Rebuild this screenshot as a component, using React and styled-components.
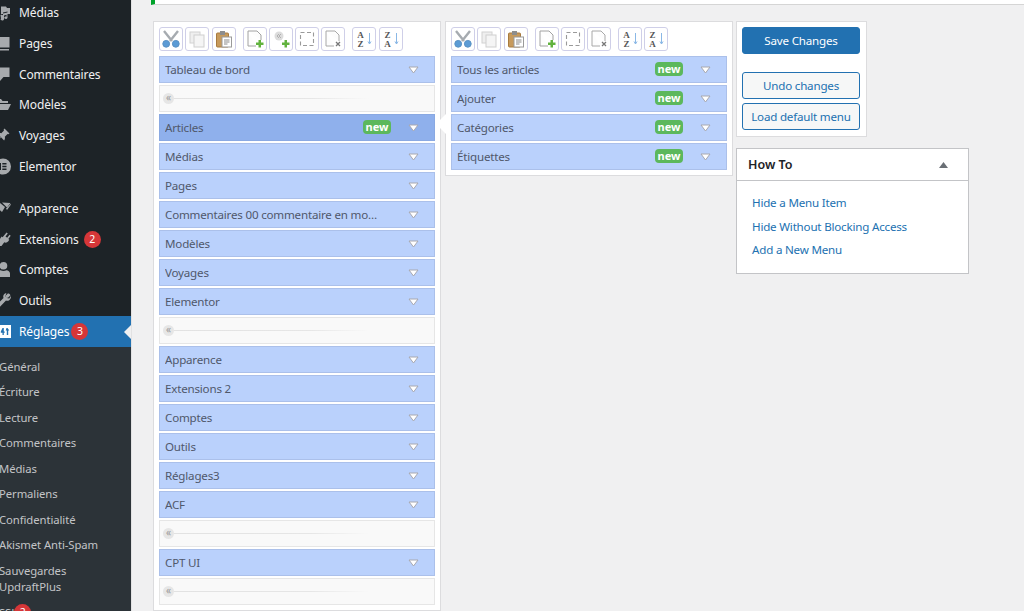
import styled, { createGlobalStyle } from 'styled-components';

const GlobalStyle = createGlobalStyle`
  html, body { margin: 0; padding: 0; height: 611px; overflow: hidden; background: #f0f0f1; }
  body { font-family: "Noto Sans", "Open Sans", sans-serif; font-size: 12px; color: #3c434a; }
`;

const Page = styled.div`
  display: flex;
  width: 1024px;
  height: 611px;
  overflow: hidden;
`;

/* ---- barre latérale ---- */
const Sidebar = styled.nav`
  position: relative;
  flex: 0 0 131px;
  height: 611px;
  overflow: hidden;
  background: #1d2327;
  border-right: 1px solid #e2e2e3;
  box-sizing: content-box;
`;

const MenuList = styled.div`
  margin-top: -2.9px;
`;

const MenuRow = styled.div`
  display: flex;
  align-items: center;
  height: ${(p) => (p.$active ? '31px' : '30.8px')};
  margin-top: ${(p) => (p.$gap ? '11px' : '0')};
  color: ${(p) => (p.$active ? '#fff' : '#f0f0f1')};
  background: ${(p) => (p.$active ? '#2271b1' : 'transparent')};
  font-size: 12px;
  letter-spacing: -0.12px;
  position: relative;
`;

const MenuIcon = styled.svg`
  flex: 0 0 11px;
  width: 11px;
  height: 17px;
  margin-right: 8px;
  fill: ${(p) => (p.$active ? '#fff' : '#a7aaad')};
`;

const CountBadge = styled.span`
  display: inline-flex;
  align-items: center;
  justify-content: center;
  width: 17px;
  height: 17px;
  margin-left: ${(p) => p.$offset || 5}px;
  border-radius: 50%;
  background: #d63638;
  color: #fff;
  font-size: 10.5px;
  line-height: 1;
`;

const ActiveNotch = styled.span`
  position: absolute;
  right: 0;
  top: 50%;
  margin-top: -7px;
  border: 7px solid transparent;
  border-right-color: #f0f0f1;
  border-left-width: 0;
`;

const SubMenu = styled.div`
  background: #2c3338;
  padding-top: 6.7px;
`;

const SubRow = styled.div`
  margin-left: -1px;
  padding: 4.75px 0;
  width: 128px;
  line-height: 16px;
  font-size: 11.3px;
  letter-spacing: -0.08px;
  color: #c3c4c7;
  display: flex;
  align-items: center;
`;

/* ---- contenu ---- */
const Main = styled.main`
  flex: 1;
  min-width: 0;
  display: flex;
  flex-direction: column;
`;

const Notice = styled.div`
  height: 4px;
  margin-left: 19px;
  background: #fff;
  border-bottom: 1px solid #d5d5d5;
  border-left: 4px solid #00a32a;
  flex: none;
`;

const Columns = styled.div`
  display: flex;
  align-items: flex-start;
  gap: 3px;
  margin: 16px 0 0 21px;
`;

const EditorColumns = styled.div`
  display: flex;
  align-items: flex-start;
  gap: 4px;
`;

const Panel = styled.section`
  position: relative;
  box-sizing: border-box;
  width: 288px;
  padding: 5px;
  background: #fff;
  border: 1px solid #dcdcde;
`;

const Toolbar = styled.div`
  display: flex;
  gap: 7px;
  margin-bottom: 5px;
`;

const ToolGroup = styled.div`
  display: flex;
  gap: 2.3px;
`;

const ToolButton = styled.button`
  display: flex;
  align-items: center;
  justify-content: center;
  box-sizing: border-box;
  width: 24px;
  height: 24px;
  padding: 0;
  background: #fff;
  border: 1px solid #cfcfe8;
  border-radius: 3px;
`;

const Rows = styled.div`
  display: flex;
  flex-direction: column;
  gap: 2px;
`;

const ItemRow = styled.div`
  position: relative;
  display: flex;
  align-items: center;
  box-sizing: border-box;
  height: 27px;
  padding: 0 15px 0 5px;
  background: ${(p) => (p.$selected ? '#8fb0ec' : '#bad1fc')};
  border: 1px solid ${(p) => (p.$selected ? '#8aa9e2' : '#abc0ea')};
  color: #50586b;
  font-size: 11.6px;
  letter-spacing: -0.2px;
  white-space: nowrap;
`;

const ItemTitle = styled.span`
  flex: 1;
  min-width: 0;
  margin-right: ${(p) => (p.$plain ? '30px' : '0')};
  overflow: hidden;
  text-overflow: ellipsis;
`;

const NewBadge = styled.span`
  flex: none;
  width: 28px;
  height: 14px;
  margin: 0 17px 2px 4px;
  border-radius: 4px;
  background: #5cb85c;
  color: #fff;
  font-size: 11px;
  font-weight: 700;
  letter-spacing: 0;
  line-height: 13px;
  text-align: center;
`;

const SeparatorRow = styled.div`
  display: flex;
  align-items: center;
  box-sizing: border-box;
  height: 27px;
  padding: 0 65px 0 3px;
  background: #f9f9f9;
  border: 1px solid #e6e6e6;
`;

const SepKnob = styled.span`
  flex: none;
  width: 11px;
  height: 11px;
  border-radius: 50%;
  background: #e6e6e6;
  color: #9a9a9a;
  font-size: 10px;
  line-height: 9px;
  text-align: center;
`;

const SepLine = styled.span`
  flex: 1;
  height: 1px;
  background: linear-gradient(to right, #e2e2e2 0%, #e6e6e6 70%, #f9f9f9 100%);
`;

const SubmenuTail = styled.span`
  position: absolute;
  left: -10px;
  top: 92px;
  border: 10px solid transparent;
  border-left-width: 0;
  border-right-color: #fff;
`;

const SideColumn = styled.div`
  display: flex;
  flex-direction: column;
  gap: 11px;
`;

const ActionBox = styled.div`
  box-sizing: border-box;
  display: flex;
  flex-direction: column;
  width: 131px;
  height: 116px;
  padding: 5px;
  background: #fff;
  border: 1px solid #dcdcde;
`;

const ActionButton = styled.button`
  box-sizing: border-box;
  width: 118px;
  height: 27px;
  margin-top: ${(p) => p.$top || 0}px;
  padding: 0;
  border: 1px solid #2271b1;
  border-radius: 3px;
  background: ${(p) => (p.$primary ? '#2271b1' : '#f6f7f7')};
  color: ${(p) => (p.$primary ? '#fff' : '#2271b1')};
  font-family: inherit;
  font-size: 11.6px;
  letter-spacing: -0.2px;
`;

const HowToBox = styled.div`
  box-sizing: border-box;
  width: 233px;
  height: 126px;
  background: #fff;
  border: 1px solid #c3c4c7;
`;

const HowToHeader = styled.div`
  display: flex;
  align-items: center;
  justify-content: space-between;
  box-sizing: border-box;
  height: 32px;
  padding: 0 20px 0 11px;
  border-bottom: 1px solid #c3c4c7;
  color: #1d2327;
  font-size: 12.5px;
  font-weight: 600;
`;

const HowToLinks = styled.div`
  display: flex;
  flex-direction: column;
  gap: 7.3px;
  padding: 14px 15px;
`;

const HowToLink = styled.a`
  color: #2271b1;
  font-size: 11.6px;
  letter-spacing: -0.2px;
  line-height: 16.3px;
  text-decoration: none;
`;

/* ---- icônes ---- */
const IconShape = {
  media: (
    <path d="M7 2.500h5l1 1.500h3v6h-2.500V7.500L9 8.600V10H7zM6.500 11c1-.6 2-.3 2.500.2V9.500l4.500-1v5.200c-.2 1-1.600 1.500-2.500 1.100-1-.4-1-1.500-.2-2 .5-.3 1.200-.3 1.700-.1V10.800l-2.500.6v3.800c-.2 1-1.500 1.500-2.500 1.100-.9-.3-1.200-1.300-.5-1.800z" />
  ),
  page: <path d="M2 2h13.500v10.500H2zM2 14h13v1.500H2z" />,
  comment: <path d="M1 1.500h14.500v9.500H9.500L5.500 15.500V11H1z" />,
  folder: <path d="M2 3h5l1.500 2H14v2H5L2.500 12zM6 8h11l-3 6H3z" />,
  pin: <path d="M10.500 1.500l5 5-1.200.8-.8-.4-2.700 2.800c.4 1.500.2 2.700-.7 3.700L7 10.300 3 14.800 2 15l.2-1 4.500-4L3.600 6.900c1-.9 2.200-1.100 3.700-.7L10 3.500l-.4-.8z" />,
  elementor: (
    <path
      fillRule="evenodd"
      d="M9 .5a8 8 0 1 1 0 16 8 8 0 0 1 0-16zM5.500 5v7H7V5zM8.300 5v1.500H12.500V5zM8.300 7.800v1.400H12.500V7.800zM8.300 10.500V12H12.500v-1.500z"
    />
  ),
  brush: <path d="M1 6l5-3 5 4-3 5zM8 2.500l8.500.5-3.500 4.500zM12 8.500l1-.8 3.500-3.700.5.5-4 5.500z" />,
  plugin: <path d="M12.500 1.500l1.300 1-2.300 3 1.700 1.300 2.300-3 1.200 1-2.400 3.200 1 .8-1 1.500c-1 1.300-2.700 1.700-4 1l-2.800 3.700H3V14l3-3.300c-.5-1.200-.3-2.600.6-3.800l1-1.400 1 .8z" />,
  user: <path d="M9.500 1a3.800 3.800 0 1 1 0 7.600 3.800 3.800 0 0 1 0-7.600zM3.500 16v-3.500C3.500 10.500 5 9.500 6.500 9.200c1.800 1 4.200 1 6 0 1.600.3 3.500 1.300 3.500 3.300V16z" />,
  wrench: <path d="M13 1.200c1.500-.2 3 .7 3.500 2.100l-2.500 2.500-1.800-.4-.4-1.800 2.400-2.300zM16.800 4c.4 1.500-.2 3.300-1.600 4.200-1 .6-2.200.7-3.200.3L5.500 15.300c-.8.800-2 .8-2.800 0s-.7-2 .1-2.800L9.500 6c-.5-1.200-.3-2.500.4-3.500.6-.8 1.500-1.300 2.500-1.400l-1 2.900 1.300 2.100 2.500.3z" />,
};

function SideIcon({ name, active }) {
  if (name === 'settings') {
    return (
      <MenuIcon viewBox="6 0 11 17" $active>
        <path d="M6 2h11v13H6z" />
        <path fill="#2271b1" d="M8.500 5h1.300v3.500h.9v1.200h-.9V12H8.500V9.700H6.800V8.500zM12.500 5h1l1.800 2.500h-1.100V12h-1.400V7.500h-1.100z" />
      </MenuIcon>
    );
  }
  return (
    <MenuIcon viewBox="6 0 11 17" $active={active}>
      {IconShape[name]}
    </MenuIcon>
  );
}

const Chevron = ({ up }) => (
  <svg width="11" height="8" viewBox="0 0 11 8" style={{ flex: 'none' }}>
    <path d="M1 1h9L5.500 7z" fill="#fff" stroke="#a8a8b0" strokeWidth="1" strokeLinejoin="round" transform={up ? 'rotate(180 5.500 4)' : undefined} />
  </svg>
);

const CutIcon = () => (
  <svg width="20" height="20" viewBox="0 0 20 20">
    <path d="M3 2l8 10M17 2L9 12" stroke="#a6abb0" strokeWidth="2.400" fill="none" />
    <circle cx="5.200" cy="14.800" r="3.400" fill="#5b9bd5" stroke="#5a92c4" />
    <circle cx="14.800" cy="14.800" r="3.400" fill="#5b9bd5" stroke="#5a92c4" />
  </svg>
);
const CopyIcon = () => (
  <svg width="18" height="18" viewBox="0 0 18 18">
    <rect x="2" y="2" width="10" height="11" fill="#efefef" stroke="#d2d2d2" />
    <rect x="6" y="5" width="10" height="12" fill="#f5f5f5" stroke="#cfcfcf" />
  </svg>
);
const PasteIcon = () => (
  <svg width="18" height="18" viewBox="0 0 18 18">
    <rect x="1.500" y="3" width="12" height="14" rx="1" fill="#c79a5c" stroke="#a87a3e" />
    <rect x="5" y="1" width="5" height="4" fill="#8d8d8d" />
    <rect x="7" y="7" width="9.500" height="10" fill="#fff" stroke="#9a9a9a" />
    <path d="M9 10h5.500M9 12h5.500M9 14h3.500" stroke="#8a8a8a" />
  </svg>
);
const GreenPlus = () => <path d="M13.500 11h2.500v2.500h2.500V16H16v2.500h-2.500V16H11v-2.500h2.500z" fill="#62b33e" />;
const NewIcon = () => (
  <svg width="20" height="20" viewBox="0 0 20 20">
    <path d="M3 2h9l4 4v5M11 17H3V2" fill="#fdfdfd" stroke="#a2a2a2" />
    <GreenPlus />
  </svg>
);
const NewSepIcon = () => (
  <svg width="20" height="20" viewBox="0 0 20 20">
    <circle cx="8" cy="7" r="4.500" fill="#dcdcdc" />
    <path d="M8 5L6 7l2 2M10 5L8 7l2 2" stroke="#a5a5a5" fill="none" strokeWidth=".8" />
    <GreenPlus />
  </svg>
);
const SelectIcon = () => (
  <svg width="18" height="18" viewBox="0 0 18 18">
    <rect x="2.500" y="2.500" width="13" height="13" fill="none" stroke="#9a9a9a" strokeWidth="1.100" strokeDasharray="4 2.500" />
  </svg>
);
const DeleteIcon = () => (
  <svg width="20" height="20" viewBox="0 0 20 20">
    <path d="M3 2h9l4 4v6M11 17H3V2" fill="#fdfdfd" stroke="#a8a8a8" />
    <path d="M13 13l4 4m0-4l-4 4" stroke="#777" strokeWidth="1.300" />
  </svg>
);
const SortIcon = ({ top, bottom }) => (
  <svg width="20" height="20" viewBox="0 0 20 20">
    <text x="6.500" y="8.500" textAnchor="middle" fontFamily="Liberation Serif, serif" fontSize="9" fontWeight="700" fill="#555">{top}</text>
    <text x="6.500" y="18" textAnchor="middle" fontFamily="Liberation Serif, serif" fontSize="9" fontWeight="700" fill="#555">{bottom}</text>
    <path d="M15.500 4v11M14 12.500l1.500 2.500 1.500-2.500" stroke="#8ab8e6" fill="none" strokeWidth="1" />
  </svg>
);

/* ---- données ---- */
const sideTop = [
  { name: 'media', label: 'Médias' },
  { name: 'page', label: 'Pages' },
  { name: 'comment', label: 'Commentaires' },
  { name: 'folder', label: 'Modèles' },
  { name: 'pin', label: 'Voyages' },
  { name: 'elementor', label: 'Elementor' },
  { name: 'brush', label: 'Apparence', gap: true },
  { name: 'plugin', label: 'Extensions', count: 2 },
  { name: 'user', label: 'Comptes' },
  { name: 'wrench', label: 'Outils' },
];

const sideSub = ['Général', 'Écriture', 'Lecture', 'Commentaires', 'Médias', 'Permaliens', 'Confidentialité', 'Akismet Anti-Spam'];

const topLevel = [
  { title: 'Tableau de bord' },
  { sep: true },
  { title: 'Articles', selected: true, isNew: true },
  { title: 'Médias' },
  { title: 'Pages' },
  { title: 'Commentaires 00 commentaire en modération' },
  { title: 'Modèles' },
  { title: 'Voyages' },
  { title: 'Elementor' },
  { sep: true },
  { title: 'Apparence' },
  { title: 'Extensions 2' },
  { title: 'Comptes' },
  { title: 'Outils' },
  { title: 'Réglages3' },
  { title: 'ACF' },
  { sep: true },
  { title: 'CPT UI' },
  { sep: true },
];

const subLevel = ['Tous les articles', 'Ajouter', 'Catégories', 'Étiquettes'];

function MenuItems({ items }) {
  return (
    <Rows>
      {items.map((item, index) =>
        item.sep ? (
          <SeparatorRow key={index}>
            <SepKnob>«</SepKnob>
            <SepLine />
          </SeparatorRow>
        ) : (
          <ItemRow key={index} $selected={item.selected}>
            <ItemTitle $plain={!item.isNew}>{item.title}</ItemTitle>
            {item.isNew && <NewBadge>new</NewBadge>}
            <Chevron />
          </ItemRow>
        )
      )}
    </Rows>
  );
}

function EditorToolbar({ withSeparator }) {
  return (
    <Toolbar>
      <ToolGroup>
        <ToolButton><CutIcon /></ToolButton>
        <ToolButton><CopyIcon /></ToolButton>
        <ToolButton><PasteIcon /></ToolButton>
      </ToolGroup>
      <ToolGroup>
        <ToolButton><NewIcon /></ToolButton>
        {withSeparator && <ToolButton><NewSepIcon /></ToolButton>}
        <ToolButton><SelectIcon /></ToolButton>
        <ToolButton><DeleteIcon /></ToolButton>
      </ToolGroup>
      <ToolGroup>
        <ToolButton><SortIcon top="A" bottom="Z" /></ToolButton>
        <ToolButton><SortIcon top="Z" bottom="A" /></ToolButton>
      </ToolGroup>
    </Toolbar>
  );
}

export default function App() {
  return (
    <Page>
      <GlobalStyle />
      <Sidebar>
        <MenuList>
          {sideTop.map((item) => (
            <MenuRow key={item.label} $gap={item.gap}>
              <SideIcon name={item.name} />
              {item.label}
              {item.count && <CountBadge>{item.count}</CountBadge>}
            </MenuRow>
          ))}
          <MenuRow $active>
            <SideIcon name="settings" active />
            Réglages
            <CountBadge $offset={2}>3</CountBadge>
            <ActiveNotch />
          </MenuRow>
          <SubMenu>
            {sideSub.map((label) => (
              <SubRow key={label}>{label}</SubRow>
            ))}
            <SubRow>Sauvegardes UpdraftPlus</SubRow>
            <SubRow>
              SSL
              <CountBadge $offset={-3}>2</CountBadge>
            </SubRow>
          </SubMenu>
        </MenuList>
      </Sidebar>
      <Main>
        <Notice />
        <Columns>
          <EditorColumns>
            <Panel>
              <EditorToolbar withSeparator />
              <MenuItems items={topLevel} />
            </Panel>
            <Panel>
              <SubmenuTail />
              <EditorToolbar />
              <MenuItems items={subLevel.map((title) => ({ title, isNew: true }))} />
            </Panel>
          </EditorColumns>
          <SideColumn>
            <ActionBox>
              <ActionButton $primary>Save Changes</ActionButton>
              <ActionButton $top={18}>Undo changes</ActionButton>
              <ActionButton $top={4}>Load default menu</ActionButton>
            </ActionBox>
            <HowToBox>
              <HowToHeader>
                How To
                <svg width="9" height="6" viewBox="0 0 9 6"><path d="M4.500 0L9 6H0z" fill="#6a6f75" /></svg>
              </HowToHeader>
              <HowToLinks>
                <HowToLink>Hide a Menu Item</HowToLink>
                <HowToLink>Hide Without Blocking Access</HowToLink>
                <HowToLink>Add a New Menu</HowToLink>
              </HowToLinks>
            </HowToBox>
          </SideColumn>
        </Columns>
      </Main>
    </Page>
  );
}
